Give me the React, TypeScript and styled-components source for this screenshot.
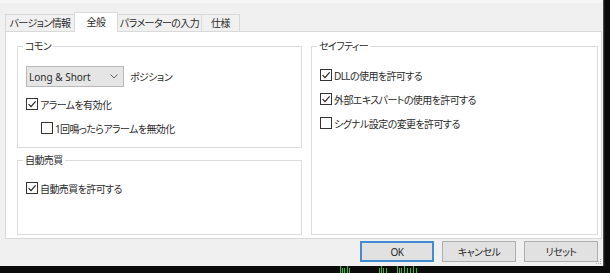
import React from "react";
import styled, { createGlobalStyle } from "styled-components";

const Global = createGlobalStyle`
  html, body { margin: 0; padding: 0; background: #0b0b0b; }
  body { font-family: "Noto Sans", "Noto Sans CJK JP", sans-serif; }
`;

const Screen = styled.div`
  width: 610px;
  height: 273px;
  display: flex;
  flex-direction: column;
  background: #0b0b0b;
  overflow: hidden;
`;

const Upper = styled.div`
  display: flex;
  height: 266px;
  flex: 0 0 266px;
`;

const Dialog = styled.div`
  position: relative;
  width: 603px;
  height: 266px;
  box-sizing: border-box;
  background: #f0f0f0;
  border-top: 3px solid #f6f6f6;
  padding: 9px 1px 0 5px;
  display: flex;
  flex-direction: column;
  font-family: "Noto Sans", "Noto Sans CJK JP", sans-serif;
  font-size: 10px;
  font-feature-settings: "palt";
  letter-spacing: -0.6px;
  color: #2b2b2b;
`;

const EdgeShade = styled.div`
  flex: 1;
  background: linear-gradient(to right, #6a6a6a 0, #262626 1px, #0b0b0b 2px);
`;

const TabRow = styled.div`
  display: flex;
  align-items: flex-end;
  height: 20px;
  margin-bottom: -1px;
`;

const Tab = styled.div<{ $w: number; $active?: boolean }>`
  position: relative;
  z-index: ${(p) => (p.$active ? 2 : 0)};
  width: ${(p) => p.$w}px;
  height: ${(p) => (p.$active ? 20 : 18)}px;
  box-sizing: border-box;
  border: 1px solid #d9d9d9;
  border-bottom: ${(p) => (p.$active ? "none" : "1px solid #d9d9d9")};
  margin-left: -1px;
  background: ${(p) => (p.$active ? "#ffffff" : "#f0f0f0")};
  display: flex;
  align-items: center;
  justify-content: center;
  padding-bottom: ${(p) => (p.$active ? 2 : 1)}px;
  white-space: nowrap;
  &:first-child { margin-left: 0; }
`;

const Panel = styled.div`
  position: relative;
  z-index: 1;
  height: 208px;
  box-sizing: border-box;
  border: 1px solid #d9d9d9;
  background: #ffffff;
  padding: 7px 3px 3px 11px;
  display: grid;
  grid-template-columns: 285px 1fr;
  column-gap: 9px;
`;

const Column = styled.div`
  display: flex;
  flex-direction: column;
  gap: 5px;
`;

const Group = styled.fieldset<{ $h?: number; $grow?: boolean }>`
  margin: 0;
  padding: 0 8px;
  min-width: 0;
  border: 1px solid #dcdcdc;
  box-sizing: border-box;
  ${(p) => (p.$h ? `height: ${p.$h}px;` : "")}
  ${(p) => (p.$grow ? "flex: 1;" : "")}
  display: flex;
  flex-direction: column;
`;

const Legend = styled.legend`
  margin-left: -3px;
  padding: 0 2px;
  line-height: 14px;
  height: 14px;
`;

const Stack = styled.div<{ $top: number }>`
  display: flex;
  flex-direction: column;
  gap: 10px;
  padding-top: ${(p) => p.$top}px;
`;

const Line = styled.div`
  display: flex;
  align-items: center;
  gap: 6px;
`;

const Select = styled.div`
  width: 98px;
  height: 21px;
  box-sizing: border-box;
  background: #e5e5e5;
  border: 1px solid #b9b9b9;
  display: flex;
  align-items: center;
  justify-content: space-between;
  padding: 0 5px 0 2px;
  letter-spacing: 0;
  color: #2b2b2b;
`;

const CheckRow = styled.label<{ $indent?: number }>`
  display: flex;
  align-items: center;
  gap: 2px;
  height: 14px;
  padding-left: ${(p) => p.$indent ?? 0}px;
  white-space: nowrap;
`;

const Box = styled.span`
  width: 12px;
  height: 12px;
  box-sizing: border-box;
  border: 1px solid #333;
  background: #fff;
  display: flex;
  align-items: center;
  justify-content: center;
  flex: 0 0 12px;
`;

const ButtonRow = styled.div`
  display: flex;
  justify-content: flex-end;
  gap: 8px;
  margin-top: 2px;
  padding-right: 4px;
`;

const Button = styled.div<{ $default?: boolean }>`
  width: 74px;
  height: 21px;
  box-sizing: border-box;
  background: #e1e1e1;
  border: 1px solid ${(p) => (p.$default ? "#3f8cd4" : "#adadad")};
  box-shadow: ${(p) => (p.$default ? "inset 0 0 0 1px #3f8cd4" : "none")};
  display: flex;
  align-items: center;
  justify-content: center;
`;

const Grip = styled.svg`
  position: absolute;
  right: 1px;
  bottom: 1px;
`;

const ChartStrip = styled.svg`
  display: block;
  flex: 0 0 7px;
`;

function Check({ checked }: { checked?: boolean }) {
  return (
    <Box>
      {checked && (
        <svg width="10" height="10" viewBox="0 0 10 10">
          <polyline points="1.6,5.2 4,7.6 8.6,2.4" fill="none" stroke="#222" strokeWidth="1.2" />
        </svg>
      )}
    </Box>
  );
}

function CheckItem({ label, checked, indent }: { label: string; checked?: boolean; indent?: number }) {
  return (
    <CheckRow $indent={indent}>
      <Check checked={checked} />
      <span>{label}</span>
    </CheckRow>
  );
}

const greens = [340, 342, 344, 347, 349, 379, 381, 383, 386, 397, 399, 401, 404, 407, 410, 413, 416];

export default function App() {
  return (
    <Screen>
      <Global />
      <Upper>
        <Dialog>
          <TabRow>
            <Tab $w={70}>バージョン情報</Tab>
            <Tab $w={44} $active>全般</Tab>
            <Tab $w={85}>パラメーターの入力</Tab>
            <Tab $w={39}>仕様</Tab>
          </TabRow>
          <Panel>
            <Column>
              <Group $h={109}>
                <Legend>コモン</Legend>
                <Stack $top={13}>
                  <Line>
                    <Select>
                      <span>Long &amp; Short</span>
                      <svg width="8" height="5" viewBox="0 0 8 5">
                        <polyline points="0.5,0.5 4,4 7.5,0.5" fill="none" stroke="#666" strokeWidth="1" />
                      </svg>
                    </Select>
                    <span>ポジション</span>
                  </Line>
                  <CheckItem label="アラームを有効化" checked />
                  <CheckItem label="1回鳴ったらアラームを無効化" indent={15} />
                </Stack>
              </Group>
              <Group $grow>
                <Legend>自動売買</Legend>
                <Stack $top={14}>
                  <CheckItem label="自動売買を許可する" checked />
                </Stack>
              </Group>
            </Column>
            <Group>
              <Legend>セイフティー</Legend>
              <Stack $top={15}>
                <CheckItem label="DLLの使用を許可する" checked />
                <CheckItem label="外部エキスパートの使用を許可する" checked />
                <CheckItem label="シグナル設定の変更を許可する" />
              </Stack>
            </Group>
          </Panel>
          <ButtonRow>
            <Button $default>OK</Button>
            <Button>キャンセル</Button>
            <Button>リセット</Button>
          </ButtonRow>
          <Grip width="6" height="6" viewBox="0 0 6 6">
            <rect x="4" y="0" width="1" height="1" fill="#b5b5b5" />
            <rect x="2" y="2" width="1" height="1" fill="#b5b5b5" />
            <rect x="4" y="2" width="1" height="1" fill="#b5b5b5" />
            <rect x="0" y="4" width="1" height="1" fill="#b5b5b5" />
            <rect x="2" y="4" width="1" height="1" fill="#b5b5b5" />
            <rect x="4" y="4" width="1" height="1" fill="#b5b5b5" />
          </Grip>
        </Dialog>
        <EdgeShade />
      </Upper>
      <ChartStrip width="610" height="7" viewBox="0 0 610 7">
        {greens.map((x, i) => (
          <rect key={x} x={x} y={i % 3 === 0 ? 0 : 2} width="1" height={i % 3 === 0 ? 7 : 5} fill="#2fbf3a" />
        ))}
      </ChartStrip>
    </Screen>
  );
}
